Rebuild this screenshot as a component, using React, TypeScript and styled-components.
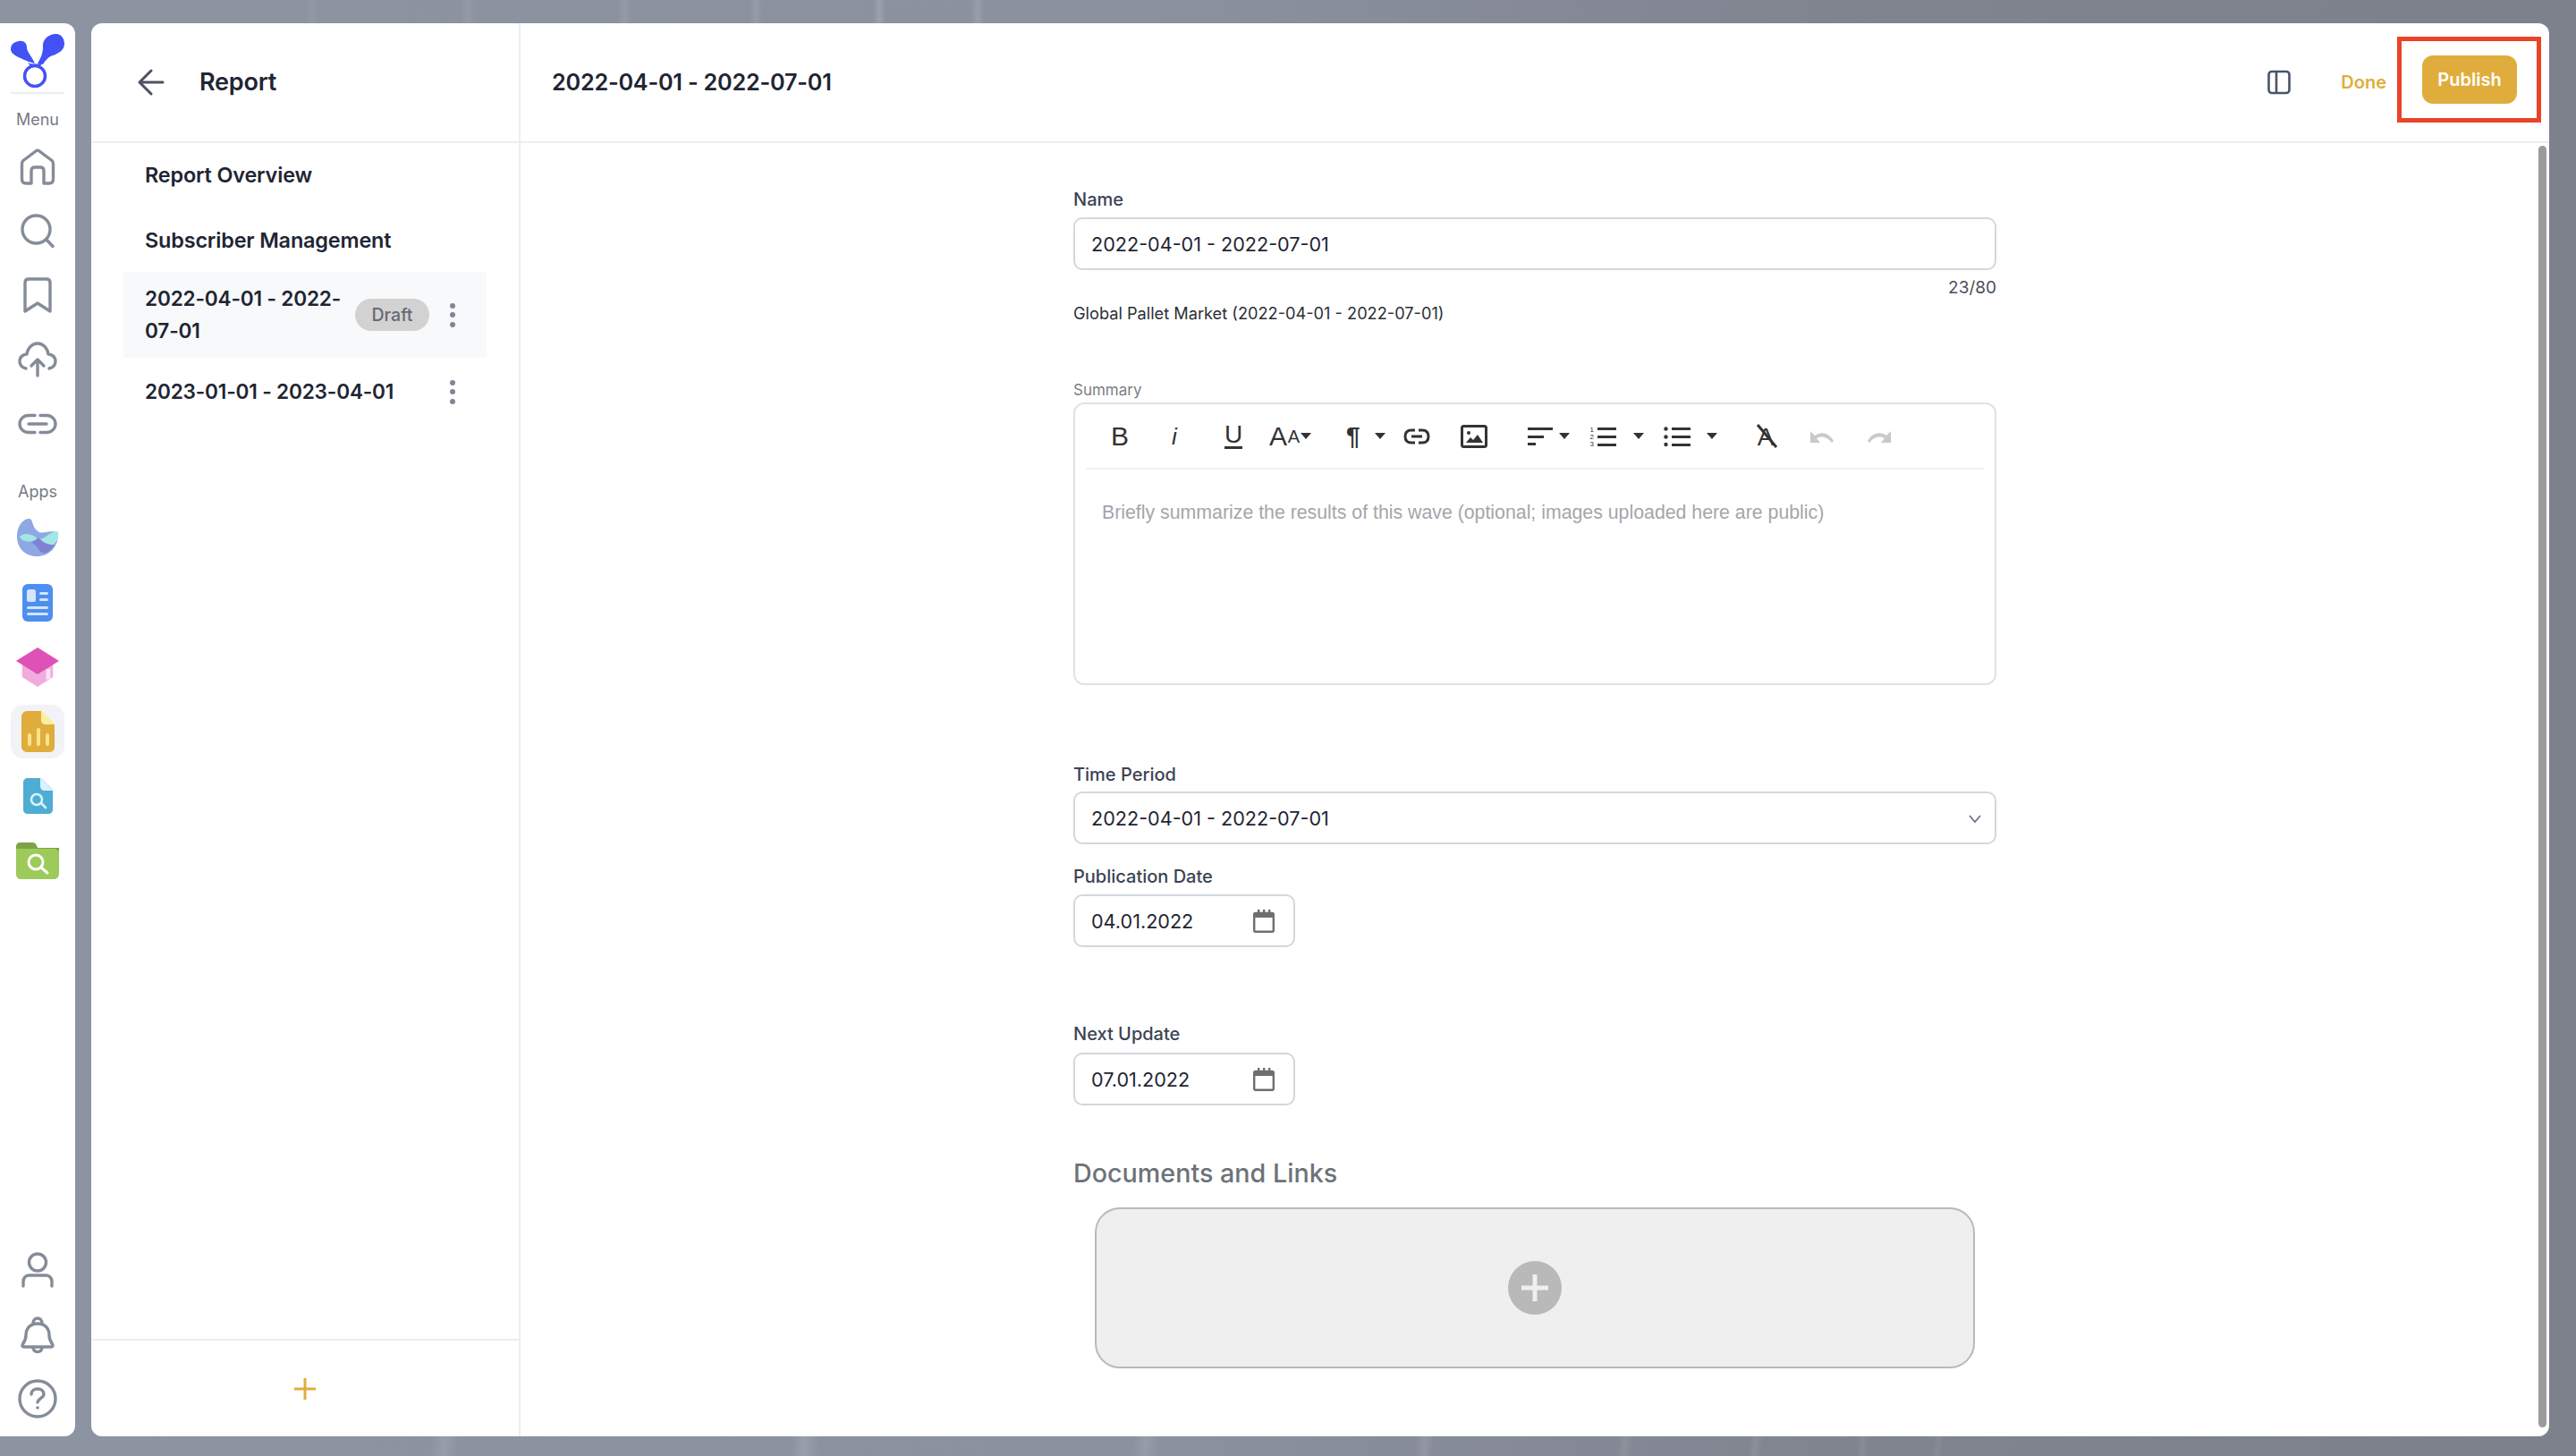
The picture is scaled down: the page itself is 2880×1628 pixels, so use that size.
import React from 'react'
import styled, { createGlobalStyle } from 'styled-components'

const FONT = `Inter, 'Noto Sans', 'Liberation Sans', sans-serif`
const GOLD = '#e0ad3c'
const INK = '#1f2533'
const LINE = '#ecedf2'
const FIELD_LINE = '#d3d7dd'

const GlobalStyle = createGlobalStyle`
  html, body {
    margin: 0;
    padding: 0;
    background: #858b97;
  }
  * {
    box-sizing: border-box;
  }
`

const Page = styled.div`
  display: flex;
  gap: 18px;
  width: 2880px;
  height: 1628px;
  padding: 26px 30px 22px 0;
  overflow: hidden;
  font-family: ${FONT};
  color: ${INK};
  background:
    linear-gradient(90deg,
      transparent 340px, rgba(255,255,255,0.05) 349px, transparent 358px,
      transparent 515px, rgba(255,255,255,0.07) 523px, transparent 531px,
      transparent 690px, rgba(255,255,255,0.08) 698px, transparent 706px,
      transparent 838px, rgba(255,255,255,0.09) 845px, transparent 852px,
      transparent 976px, rgba(255,255,255,0.14) 983px, transparent 990px,
      transparent 1086px, rgba(255,255,255,0.12) 1093px, transparent 1100px) top / 100% 26px no-repeat,
    linear-gradient(96deg,
      transparent 480px, rgba(255,255,255,0.1) 495px, transparent 510px,
      transparent 880px, rgba(255,255,255,0.12) 895px, transparent 912px,
      transparent 1260px, rgba(255,255,255,0.1) 1275px, transparent 1290px,
      transparent 1575px, rgba(255,255,255,0.1) 1585px, transparent 1595px,
      transparent 1800px, rgba(255,255,255,0.08) 1808px, transparent 1816px,
      transparent 1945px, rgba(255,255,255,0.08) 1953px, transparent 1961px,
      transparent 2066px, rgba(255,255,255,0.07) 2072px, transparent 2078px,
      transparent 2150px, rgba(255,255,255,0.06) 2156px, transparent 2162px) bottom / 100% 22px no-repeat,
    linear-gradient(90deg, #8c94a2 0%, #8b919e 45%, #7f848f 72%, #7c818c 100%);
`

const Sidebar = styled.aside`
  display: flex;
  flex-direction: column;
  align-items: center;
  flex: 0 0 84px;
  padding-bottom: 6px;
  background: #fff;
  border-radius: 0 12px 12px 0;
  color: #858c99;
`

const LogoSlot = styled.div`
  display: flex;
  justify-content: center;
  width: 60px;
  height: 79px;
  padding-top: 12px;
  border-bottom: 2px solid ${LINE};
`

const RailLabel = styled.div<{ $top: number }>`
  margin: ${({ $top }) => $top}px 0 4px;
  font-size: 18px;
  line-height: 24px;
  color: #757b86;
`

const RailItem = styled.div<{ $active?: boolean }>`
  display: flex;
  align-items: center;
  justify-content: center;
  width: 60px;
  height: 72px;
  position: relative;
  z-index: 0;
  ${({ $active }) =>
    $active &&
    `
    &::before {
      content: '';
      position: absolute;
      z-index: -1;
      left: 0;
      right: 0;
      top: 6px;
      bottom: 6px;
      background: #f2f3f7;
      border-radius: 14px;
    }
  `}
`

const RailSpacer = styled.div`
  flex: 1;
`

const Panel = styled.main`
  display: flex;
  flex: 1;
  min-width: 0;
  position: relative;
  background: #fff;
  border-radius: 12px;
  overflow: hidden;
`

const ListPane = styled.section`
  display: flex;
  flex-direction: column;
  flex: 0 0 480px;
  border-right: 2px solid ${LINE};
`

const ListHeader = styled.header`
  display: flex;
  align-items: center;
  gap: 39px;
  flex: 0 0 134px;
  padding: 0 0 1px 52px;
  border-bottom: 2px solid ${LINE};
`

const ListTitle = styled.h1`
  margin: 0;
  font-size: 27px;
  font-weight: 600;
  letter-spacing: -0.2px;
  color: ${INK};
`

const NavList = styled.nav`
  display: flex;
  flex-direction: column;
  flex: 1;
  padding: 17px 36px 0;
`

const NavHeading = styled.div`
  display: flex;
  align-items: center;
  height: 36px;
  margin-bottom: 37px;
  padding-left: 24px;
  font-size: 23.4px;
  font-weight: 600;
  letter-spacing: -0.15px;
  color: ${INK};
  &:nth-child(2) {
    margin-bottom: 18px;
  }
`

const WaveRow = styled.div<{ $selected?: boolean }>`
  display: flex;
  align-items: center;
  height: ${({ $selected }) => ($selected ? 96 : 76)}px;
  padding: 0 12px 0 24px;
  background: ${({ $selected }) => ($selected ? '#f8f9fb' : 'transparent')};
`

const WaveName = styled.div`
  flex: 1;
  font-size: 22.6px;
  font-weight: 600;
  letter-spacing: -0.17px;
  line-height: 36px;
  white-space: nowrap;
`

const DraftBadge = styled.span`
  display: flex;
  align-items: center;
  justify-content: center;
  flex: 0 0 83px;
  height: 36px;
  border-radius: 18px;
  background: #d2d2d2;
  color: #666a71;
  font-size: 19.5px;
  font-weight: 500;
`

const KebabSlot = styled.div`
  display: flex;
  flex-direction: column;
  align-items: center;
  gap: 4.5px;
  flex: 0 0 52px;
`

const Dot = styled.i`
  width: 6px;
  height: 6px;
  border-radius: 50%;
  background: #7f8795;
`

const ListFooter = styled.footer`
  display: flex;
  align-items: center;
  justify-content: center;
  flex: 0 0 109px;
  border-top: 2px solid ${LINE};
`

const Editor = styled.section`
  display: flex;
  flex-direction: column;
  flex: 1;
  min-width: 0;
`

const EditorHeader = styled.header`
  display: flex;
  align-items: center;
  flex: 0 0 134px;
  padding: 0 9px 6px 35px;
  border-bottom: 2px solid ${LINE};
`

const EditorTitle = styled.h2`
  flex: 1;
  margin: 5px 0 0;
  font-size: 25.2px;
  font-weight: 600;
  letter-spacing: -0.2px;
  color: ${INK};
`

const PanelToggle = styled.div`
  display: flex;
  margin-top: 6px;
`

const DoneLink = styled.span`
  margin: 6px 12px 0 56px;
  font-size: 20px;
  font-weight: 600;
  color: ${GOLD};
`

const CalloutFrame = styled.div`
  padding: 16px 22px 16px 23px;
  border: 5px solid #e9432a;
`

const PublishButton = styled.button`
  width: 106px;
  height: 54px;
  padding: 0;
  border: 0;
  border-radius: 12px;
  background: ${GOLD};
  color: #fff;
  font-family: ${FONT};
  font-size: 20px;
  font-weight: 600;
`

const Form = styled.form`
  display: flex;
  flex-direction: column;
  width: 1032px;
  margin-left: 618px;
  padding-top: 49px;
`

const FieldLabel = styled.label<{ $top?: number }>`
  height: 28px;
  margin-top: ${({ $top }) => $top ?? 0}px;
  font-size: 20px;
  font-weight: 500;
  line-height: 28px;
  color: #3b4354;
`

const TextBox = styled.div<{ $width?: number; $top?: number; $right?: number }>`
  display: flex;
  align-items: center;
  justify-content: space-between;
  width: ${({ $width }) => ($width ? `${$width}px` : '100%')};
  height: 59px;
  margin-top: ${({ $top }) => $top ?? 7}px;
  padding: 1px ${({ $right }) => $right ?? 21}px 0 18px;
  border: 2px solid ${FIELD_LINE};
  border-radius: 10px;
  font-size: 21.6px;
  color: ${INK};
`

const Counter = styled.div`
  margin-top: 7px;
  height: 26px;
  font-size: 19px;
  line-height: 26px;
  text-align: right;
  color: #4b4f57;
`

const FullName = styled.div`
  margin-top: 2px;
  height: 26px;
  font-size: 18.2px;
  line-height: 26px;
  color: #2c2f36;
`

const SummaryLabel = styled.div`
  margin-top: 61px;
  height: 24px;
  font-size: 17px;
  line-height: 24px;
  color: #7b7f86;
`

const RichEditor = styled.div`
  display: flex;
  flex-direction: column;
  height: 316px;
  margin-top: 2px;
  padding: 0 12px;
  border: 2px solid #dfe2e6;
  border-radius: 12px;
`

const Toolbar = styled.div`
  display: flex;
  align-items: center;
  height: 73px;
  padding-left: 6px;
  border-bottom: 2px solid #f1f1f1;
`

const Tool = styled.div<{ $w: number; $ml: number }>`
  display: flex;
  align-items: center;
  justify-content: space-between;
  flex: 0 0 ${({ $w }) => $w}px;
  height: 36px;
  margin-left: ${({ $ml }) => $ml}px;
  color: #333;
`

const ToolGlyph = styled.span<{ $italic?: boolean; $underline?: boolean; $bold?: boolean; $size?: number }>`
  display: inline-block;
  font-family: 'Liberation Sans', sans-serif;
  font-size: ${({ $size }) => $size ?? 30}px;
  line-height: 30px;
  font-style: ${({ $italic }) => ($italic ? 'italic' : 'normal')};
  font-weight: ${({ $bold }) => ($bold ? 700 : 400)};
  ${({ $underline }) => $underline && 'border-bottom: 3px solid #333; line-height: 26px;'}
`

const Placeholder = styled.div`
  padding: 35px 0 0 18px;
  font-family: 'Liberation Sans', sans-serif;
  font-size: 21.3px;
  line-height: 26px;
  color: #a4a6aa;
`

const SectionTitle = styled.h3`
  height: 40px;
  margin: 56px 0 0;
  font-size: 28.7px;
  font-weight: 500;
  line-height: 40px;
  color: #6d7278;
`

const DropZone = styled.div`
  display: flex;
  align-items: center;
  justify-content: center;
  width: 984px;
  height: 180px;
  margin: 18px 0 0 24px;
  border: 2px solid #b9b9b9;
  border-radius: 28px;
  background: #efefef;
`

const AddCircle = styled.div`
  display: flex;
  align-items: center;
  justify-content: center;
  width: 60px;
  height: 60px;
  border-radius: 50%;
  background: #b9b9b9;
`

const ScrollThumb = styled.div`
  position: absolute;
  top: 137px;
  bottom: 10px;
  right: 3px;
  width: 9px;
  border-radius: 5px;
  background: #9b9b9b;
`

const railStroke = {
  fill: 'none',
  stroke: 'currentColor',
  strokeWidth: 3.4,
  strokeLinecap: 'round' as const,
  strokeLinejoin: 'round' as const
}

const Logo = () => (
  <svg width="60" height="60" viewBox="0 0 60 60" fill="none">
    <path d="M9 8 C15 7 18 11 18 15 C18 20 23 24 27 33 L20 31 C14 28 0 24 0 17 C0 12 3 9 9 8Z" fill="#4252f5" />
    <path d="M49 0 C55 -1 60 4 60 11 C60 18 53 22 47 24 C43 25 39 29 36 34 L30 33 C33 28 36 22 36 15 C35 7 41 1 49 0Z" fill="#4252f5" />
    <circle cx="27" cy="47" r="11.5" stroke="#4252f5" strokeWidth="3.5" />
    <path d="M19 32 C23 34 31 34 36 32 L32 37 H23 Z" fill="#4252f5" />
  </svg>
)

const HomeIcon = () => (
  <svg width="40" height="41" viewBox="0 0 40 41" {...railStroke}>
    <path d="M2.5 17 C2.5 15 3 14.5 4 13.5 L18 3 C19 2 21 2 22 3 L36 13.5 C37 14.5 37.5 15 37.5 17 V34 C37.5 37 36 39 33 39 H27 V25 C27 22 25 21 23 21 H17 C15 21 13 22 13 25 V39 H7 C4 39 2.5 37 2.5 34 Z" />
  </svg>
)

const SearchIcon = () => (
  <svg width="38" height="38" viewBox="0 0 38 38" {...railStroke}>
    <circle cx="17.5" cy="17.5" r="15.5" />
    <path d="M29 29 L36 36.5" />
  </svg>
)

const BookmarkIcon = () => (
  <svg width="32" height="40" viewBox="0 0 32 40" {...railStroke}>
    <path d="M2 6 C2 3 4 2 6 2 H26 C28 2 30 3 30 6 V38 L16 29 L2 38 Z" />
  </svg>
)

const UploadIcon = () => (
  <svg width="44" height="40" viewBox="0 0 44 40" {...railStroke}>
    <path d="M9 30 C5 29 2 26 2 22 C2 17 6 14 10 14 C11 7 16 2 22 2 C28 2 33 7 34 14 C38 14 42 17 42 22 C42 26 39 29 35 30" />
    <path d="M22 38 V21 M15 27 L22 20 L29 27" />
  </svg>
)

const LinkIcon = () => (
  <svg width="44" height="24" viewBox="0 0 44 24" {...railStroke}>
    <path d="M19 2.5 H12 C6 2.5 2 7 2 12 C2 17 6 21.5 12 21.5 H19 M25 2.5 H32 C38 2.5 42 7 42 12 C42 17 38 21.5 32 21.5 H25 M12 12 H32" />
  </svg>
)

const UserIcon = () => (
  <svg width="36" height="40" viewBox="0 0 36 40" {...railStroke}>
    <circle cx="18" cy="11.5" r="9.5" />
    <path d="M2 38 V33 C2 29 5 26 8 26 H28 C31 26 34 29 34 33 V38" />
  </svg>
)

const BellIcon = () => (
  <svg width="38" height="43" viewBox="0 0 38 43" {...railStroke}>
    <path d="M4 35 C2 35 1.5 34 2.5 32 C4.5 29 6 26 6 22 C6 14 11 9 19 9 C27 9 32 14 32 22 C32 26 33.5 29 35.5 32 C36.5 34 36 35 34 35 Z" />
    <path d="M14 9 C14 1 24 1 24 9 M14 36 C15 42 23 42 24 36" />
  </svg>
)

const HelpIcon = () => (
  <svg width="44" height="44" viewBox="0 0 44 44" {...railStroke}>
    <circle cx="22" cy="22" r="20" />
    <path d="M15 17 C15 13 18 11 22 11 C26 11 29 13 29 17 C29 21 23 21 22 26" />
    <circle cx="22" cy="32" r="1.8" fill="currentColor" stroke="none" />
  </svg>
)

const AppWave = () => (
  <svg width="48" height="44" viewBox="0 0 50 44" preserveAspectRatio="none">
    <path d="M1 20 C1 8 8 0 15 0 C20 0 18 8 24 13 C30 19 36 12 49 15 C50 32 38 42 24 42 C10 42 1 32 1 20Z" fill="#8da8e2" />
    <path d="M4 20 C10 14 20 18 25 22 C32 26 40 12 49 15 C50 22 46 28 42 30 C32 30 30 24 25 22 C22 26 8 28 4 20Z" fill="#a5e6e4" />
    <path d="M18 26 C22 24 24 23 26 21 C30 25 36 30 45 29 C40 38 30 42 26 34 C24 30 20 28 18 26Z" fill="#7f82d3" />
  </svg>
)

const AppNews = () => (
  <svg width="34" height="42" viewBox="0 0 34 42">
    <rect width="34" height="42" rx="6" fill="#4d8ff0" />
    <rect x="5" y="6" width="10" height="14" rx="2.5" fill="#d5e5fb" />
    <rect x="19" y="9" width="10" height="3" rx="1.5" fill="#d5e5fb" />
    <rect x="19" y="16" width="10" height="3" rx="1.5" fill="#d5e5fb" />
    <rect x="5" y="25" width="24" height="3" rx="1.5" fill="#d5e5fb" />
    <rect x="5" y="32" width="24" height="3" rx="1.5" fill="#d5e5fb" />
  </svg>
)

const AppCourse = () => (
  <svg width="48" height="45" viewBox="0 0 50 45" preserveAspectRatio="none">
    <path d="M7 17 L25 8 L43 17 V33 L25 44 L7 33Z" fill="#f1acdd" />
    <path d="M0 15 L25 0 L50 15 L25 30Z" fill="#de51b6" />
    <path d="M35 24 H40 V37 L37.5 35 L35 37Z" fill="#fbe5f5" />
  </svg>
)

const AppReport = () => (
  <svg width="37" height="46" viewBox="0 0 37 46">
    <path d="M6 0 H22 L37 15 V40 C37 43 35 46 31 46 H6 C3 46 0 43 0 40 V6 C0 3 3 0 6 0Z" fill="#e0ad3c" />
    <path d="M22 0 H23 L37 14 V15 H27 C24 15 22 13 22 10Z" fill="#fbeea0" />
    <rect x="7" y="25" width="4" height="14" rx="2" fill="#fbe48c" />
    <rect x="17" y="19" width="4" height="20" rx="2" fill="#fbe48c" />
    <rect x="27" y="25" width="4" height="14" rx="2" fill="#fbe48c" />
  </svg>
)

const AppDocSearch = () => (
  <svg width="33" height="40" viewBox="0 0 33 40">
    <path d="M5 0 H20 L33 13 V35 C33 38 31 40 28 40 H5 C2 40 0 38 0 35 V5 C0 2 2 0 5 0Z" fill="#4facd3" />
    <path d="M19 0 H20 L33 13 V14 H24 C21 14 19 12 19 9Z" fill="#d6f3fb" />
    <circle cx="15" cy="24" r="6" fill="none" stroke="#d6f3fb" strokeWidth="2.6" />
    <path d="M20 28 L25 33" stroke="#d6f3fb" strokeWidth="2.6" strokeLinecap="round" />
  </svg>
)

const AppFolderSearch = () => (
  <svg width="48" height="41" viewBox="0 0 48 41">
    <path d="M4 0 H19 C21 0 23 2 24 6 H48 V12 H0 V4 C0 2 2 0 4 0Z" fill="#7ea345" />
    <path d="M0 7 H42 C45 7 48 9 48 12 V35 C48 39 45 41 42 41 H6 C2 41 0 39 0 35Z" fill="#9ccb5a" />
    <circle cx="22" cy="22" r="8" fill="none" stroke="#fff" strokeWidth="3" />
    <path d="M28 28 L35 34" stroke="#fff" strokeWidth="3" strokeLinecap="round" />
  </svg>
)

const BackArrow = () => (
  <svg width="30" height="30" viewBox="0 0 30 30" fill="none" stroke="#4a5263" strokeWidth="3" strokeLinecap="round" strokeLinejoin="round">
    <path d="M28 15 H2 M15 2 L2 15 L15 28" />
  </svg>
)

const PlusMark = () => (
  <svg width="24" height="24" viewBox="0 0 24 24" stroke={GOLD} strokeWidth="3">
    <path d="M12 0 V24 M0 12 H24" />
  </svg>
)

const SplitPanelIcon = () => (
  <svg width="26" height="28" viewBox="0 0 26 28" fill="none" stroke="#4a5468" strokeWidth="2.6">
    <rect x="1.5" y="2" width="23" height="24" rx="3.5" />
    <path d="M10 2 V26" />
  </svg>
)

const Caret = () => (
  <svg width="12" height="7" viewBox="0 0 12 7" fill="#333">
    <path d="M0 0 H12 L6 7Z" />
  </svg>
)

const LinkTool = () => (
  <svg width="30" height="18" viewBox="0 0 30 18" fill="none" stroke="#333" strokeWidth="3">
    <path d="M13 2 H9 C4 2 2 5 2 9 C2 13 4 16 9 16 H13 M17 2 H21 C26 2 28 5 28 9 C28 13 26 16 21 16 H17 M9 9 H21" />
  </svg>
)

const ImageTool = () => (
  <svg width="30" height="26" viewBox="0 0 30 26" fill="none">
    <rect x="1.5" y="1.5" width="27" height="23" rx="2" stroke="#333" strokeWidth="3" />
    <circle cx="9" cy="9" r="2" fill="#333" />
    <path d="M6 20 L11 14 L14 17 L19 11 L25 20Z" fill="#333" />
  </svg>
)

const AlignTool = () => (
  <svg width="28" height="22" viewBox="0 0 28 22" fill="#333">
    <rect width="28" height="3" y="1" />
    <rect width="18" height="3" y="10" />
    <rect width="9" height="3" y="18" />
  </svg>
)

const OrderedTool = () => (
  <svg width="30" height="24" viewBox="0 0 30 24" fill="#333">
    <text x="0.5" y="7" fontSize="8" fontFamily="Liberation Sans, sans-serif">1</text>
    <text x="0.5" y="15" fontSize="8" fontFamily="Liberation Sans, sans-serif">2</text>
    <text x="0.5" y="23" fontSize="8" fontFamily="Liberation Sans, sans-serif">3</text>
    <rect x="9" y="2" width="21" height="3" />
    <rect x="9" y="11" width="21" height="3" />
    <rect x="9" y="20" width="21" height="3" />
  </svg>
)

const BulletTool = () => (
  <svg width="30" height="24" viewBox="0 0 30 24" fill="#333">
    <circle cx="2.5" cy="3.5" r="2.2" />
    <circle cx="2.5" cy="12.5" r="2.2" />
    <circle cx="2.5" cy="21" r="2.2" />
    <rect x="9" y="2" width="21" height="3" />
    <rect x="9" y="11" width="21" height="3" />
    <rect x="9" y="20" width="21" height="3" />
  </svg>
)

const StrikeOver = () => (
  <svg width="28" height="28" viewBox="0 0 28 28" stroke="#333" strokeWidth="3" fill="none">
    <path d="M5 1 L26 26" />
  </svg>
)

const ClearGlyph = styled.span`
  display: inline-block;
  position: relative;
  width: 28px;
  height: 28px;
  font-family: 'Liberation Sans', sans-serif;
  font-size: 28px;
  line-height: 30px;
  text-align: center;
  svg {
    position: absolute;
    left: 0;
    top: 0;
  }
`

const UndoTool = () => (
  <svg width="26" height="18" viewBox="0 0 26 18" fill="#c9c9c9">
    <path d="M0 3 V16 H11 L7 11 C12 8 19 9 24 16 L26 14 C21 5 12 3 5 8 Z" />
  </svg>
)

const RedoTool = () => (
  <svg width="26" height="18" viewBox="0 0 26 18" fill="#c9c9c9">
    <path d="M26 3 V16 H15 L19 11 C14 8 7 9 2 16 L0 14 C5 5 14 3 21 8 Z" />
  </svg>
)

const CalendarIcon = () => (
  <svg width="24" height="26" viewBox="0 0 24 26" fill="none">
    <rect x="1.2" y="4" width="21.6" height="20.8" rx="1.5" stroke="#6f6f6f" strokeWidth="2.4" />
    <rect x="1" y="4" width="22" height="5" fill="#6f6f6f" />
    <rect x="5" y="0" width="2.4" height="5" fill="#6f6f6f" />
    <rect x="11" y="0" width="2.4" height="5" fill="#6f6f6f" />
    <rect x="17" y="0" width="2.4" height="5" fill="#6f6f6f" />
  </svg>
)

const ChevronIcon = () => (
  <svg width="14" height="9" viewBox="0 0 14 9" fill="none" stroke="#6c7280" strokeWidth="1.8">
    <path d="M1 1 L7 8 L13 1" />
  </svg>
)

const Kebab = () => (
  <KebabSlot>
    <Dot />
    <Dot />
    <Dot />
  </KebabSlot>
)

const menuIcons = [HomeIcon, SearchIcon, BookmarkIcon, UploadIcon, LinkIcon]
const appIcons = [AppWave, AppNews, AppCourse, AppReport, AppDocSearch, AppFolderSearch]
const utilIcons = [UserIcon, BellIcon, HelpIcon]

export default function App() {
  return (
    <Page>
      <GlobalStyle />
      <Sidebar>
        <LogoSlot>
          <Logo />
        </LogoSlot>
        <RailLabel $top={17}>Menu</RailLabel>
        {menuIcons.map((Icon, index) => (
          <RailItem key={index}>
            <Icon />
          </RailItem>
        ))}
        <RailLabel $top={28}>Apps</RailLabel>
        {appIcons.map((Icon, index) => (
          <RailItem key={index} $active={index === 3}>
            <Icon />
          </RailItem>
        ))}
        <RailSpacer />
        {utilIcons.map((Icon, index) => (
          <RailItem key={index}>
            <Icon />
          </RailItem>
        ))}
      </Sidebar>

      <Panel>
        <ListPane>
          <ListHeader>
            <BackArrow />
            <ListTitle>Report</ListTitle>
          </ListHeader>
          <NavList>
            <NavHeading>Report Overview</NavHeading>
            <NavHeading>Subscriber Management</NavHeading>
            <WaveRow $selected>
              <WaveName>
                2022-04-01 - 2022-
                <br />
                07-01
              </WaveName>
              <DraftBadge>Draft</DraftBadge>
              <Kebab />
            </WaveRow>
            <WaveRow>
              <WaveName>2023-01-01 - 2023-04-01</WaveName>
              <Kebab />
            </WaveRow>
          </NavList>
          <ListFooter>
            <PlusMark />
          </ListFooter>
        </ListPane>

        <Editor>
          <EditorHeader>
            <EditorTitle>2022-04-01 - 2022-07-01</EditorTitle>
            <PanelToggle>
              <SplitPanelIcon />
            </PanelToggle>
            <DoneLink>Done</DoneLink>
            <CalloutFrame>
              <PublishButton type="button">Publish</PublishButton>
            </CalloutFrame>
          </EditorHeader>

          <Form>
            <FieldLabel>Name</FieldLabel>
            <TextBox $top={6}>2022-04-01 - 2022-07-01</TextBox>
            <Counter>23/80</Counter>
            <FullName>Global Pallet Market (2022-04-01 - 2022-07-01)</FullName>

            <SummaryLabel>Summary</SummaryLabel>
            <RichEditor>
              <Toolbar>
                <Tool $w={20} $ml={22}>
                  <ToolGlyph>B</ToolGlyph>
                </Tool>
                <Tool $w={8} $ml={48}>
                  <ToolGlyph $italic $size={26}>i</ToolGlyph>
                </Tool>
                <Tool $w={24} $ml={51}>
                  <ToolGlyph $underline $size={28}>U</ToolGlyph>
                </Tool>
                <Tool $w={47} $ml={26}>
                  <ToolGlyph>A</ToolGlyph>
                  <ToolGlyph $size={20}>A</ToolGlyph>
                  <Caret />
                </Tool>
                <Tool $w={44} $ml={39}>
                  <ToolGlyph $bold $size={28}>¶</ToolGlyph>
                  <Caret />
                </Tool>
                <Tool $w={30} $ml={20}>
                  <LinkTool />
                </Tool>
                <Tool $w={30} $ml={34}>
                  <ImageTool />
                </Tool>
                <Tool $w={47} $ml={45}>
                  <AlignTool />
                  <Caret />
                </Tool>
                <Tool $w={61} $ml={22}>
                  <OrderedTool />
                  <Caret />
                </Tool>
                <Tool $w={60} $ml={22}>
                  <BulletTool />
                  <Caret />
                </Tool>
                <Tool $w={28} $ml={40}>
                  <ClearGlyph>
                    A
                    <StrikeOver />
                  </ClearGlyph>
                </Tool>
                <Tool $w={26} $ml={36}>
                  <UndoTool />
                </Tool>
                <Tool $w={26} $ml={38}>
                  <RedoTool />
                </Tool>
              </Toolbar>
              <Placeholder>Briefly summarize the results of this wave (optional; images uploaded here are public)</Placeholder>
            </RichEditor>

            <FieldLabel $top={86}>Time Period</FieldLabel>
            <TextBox $right={15} $top={5}>
              2022-04-01 - 2022-07-01
              <ChevronIcon />
            </TextBox>

            <FieldLabel $top={22}>Publication Date</FieldLabel>
            <TextBox $width={248} $top={6}>
              04.01.2022
              <CalendarIcon />
            </TextBox>

            <FieldLabel $top={83}>Next Update</FieldLabel>
            <TextBox $width={248}>
              07.01.2022
              <CalendarIcon />
            </TextBox>

            <SectionTitle>Documents and Links</SectionTitle>
            <DropZone>
              <AddCircle>
                <svg width="30" height="30" viewBox="0 0 30 30" fill="#efefef">
                  <rect x="12.5" y="0" width="5" height="30" />
                  <rect x="0" y="12.5" width="30" height="5" />
                </svg>
              </AddCircle>
            </DropZone>
          </Form>
        </Editor>
        <ScrollThumb />
      </Panel>
    </Page>
  )
}
